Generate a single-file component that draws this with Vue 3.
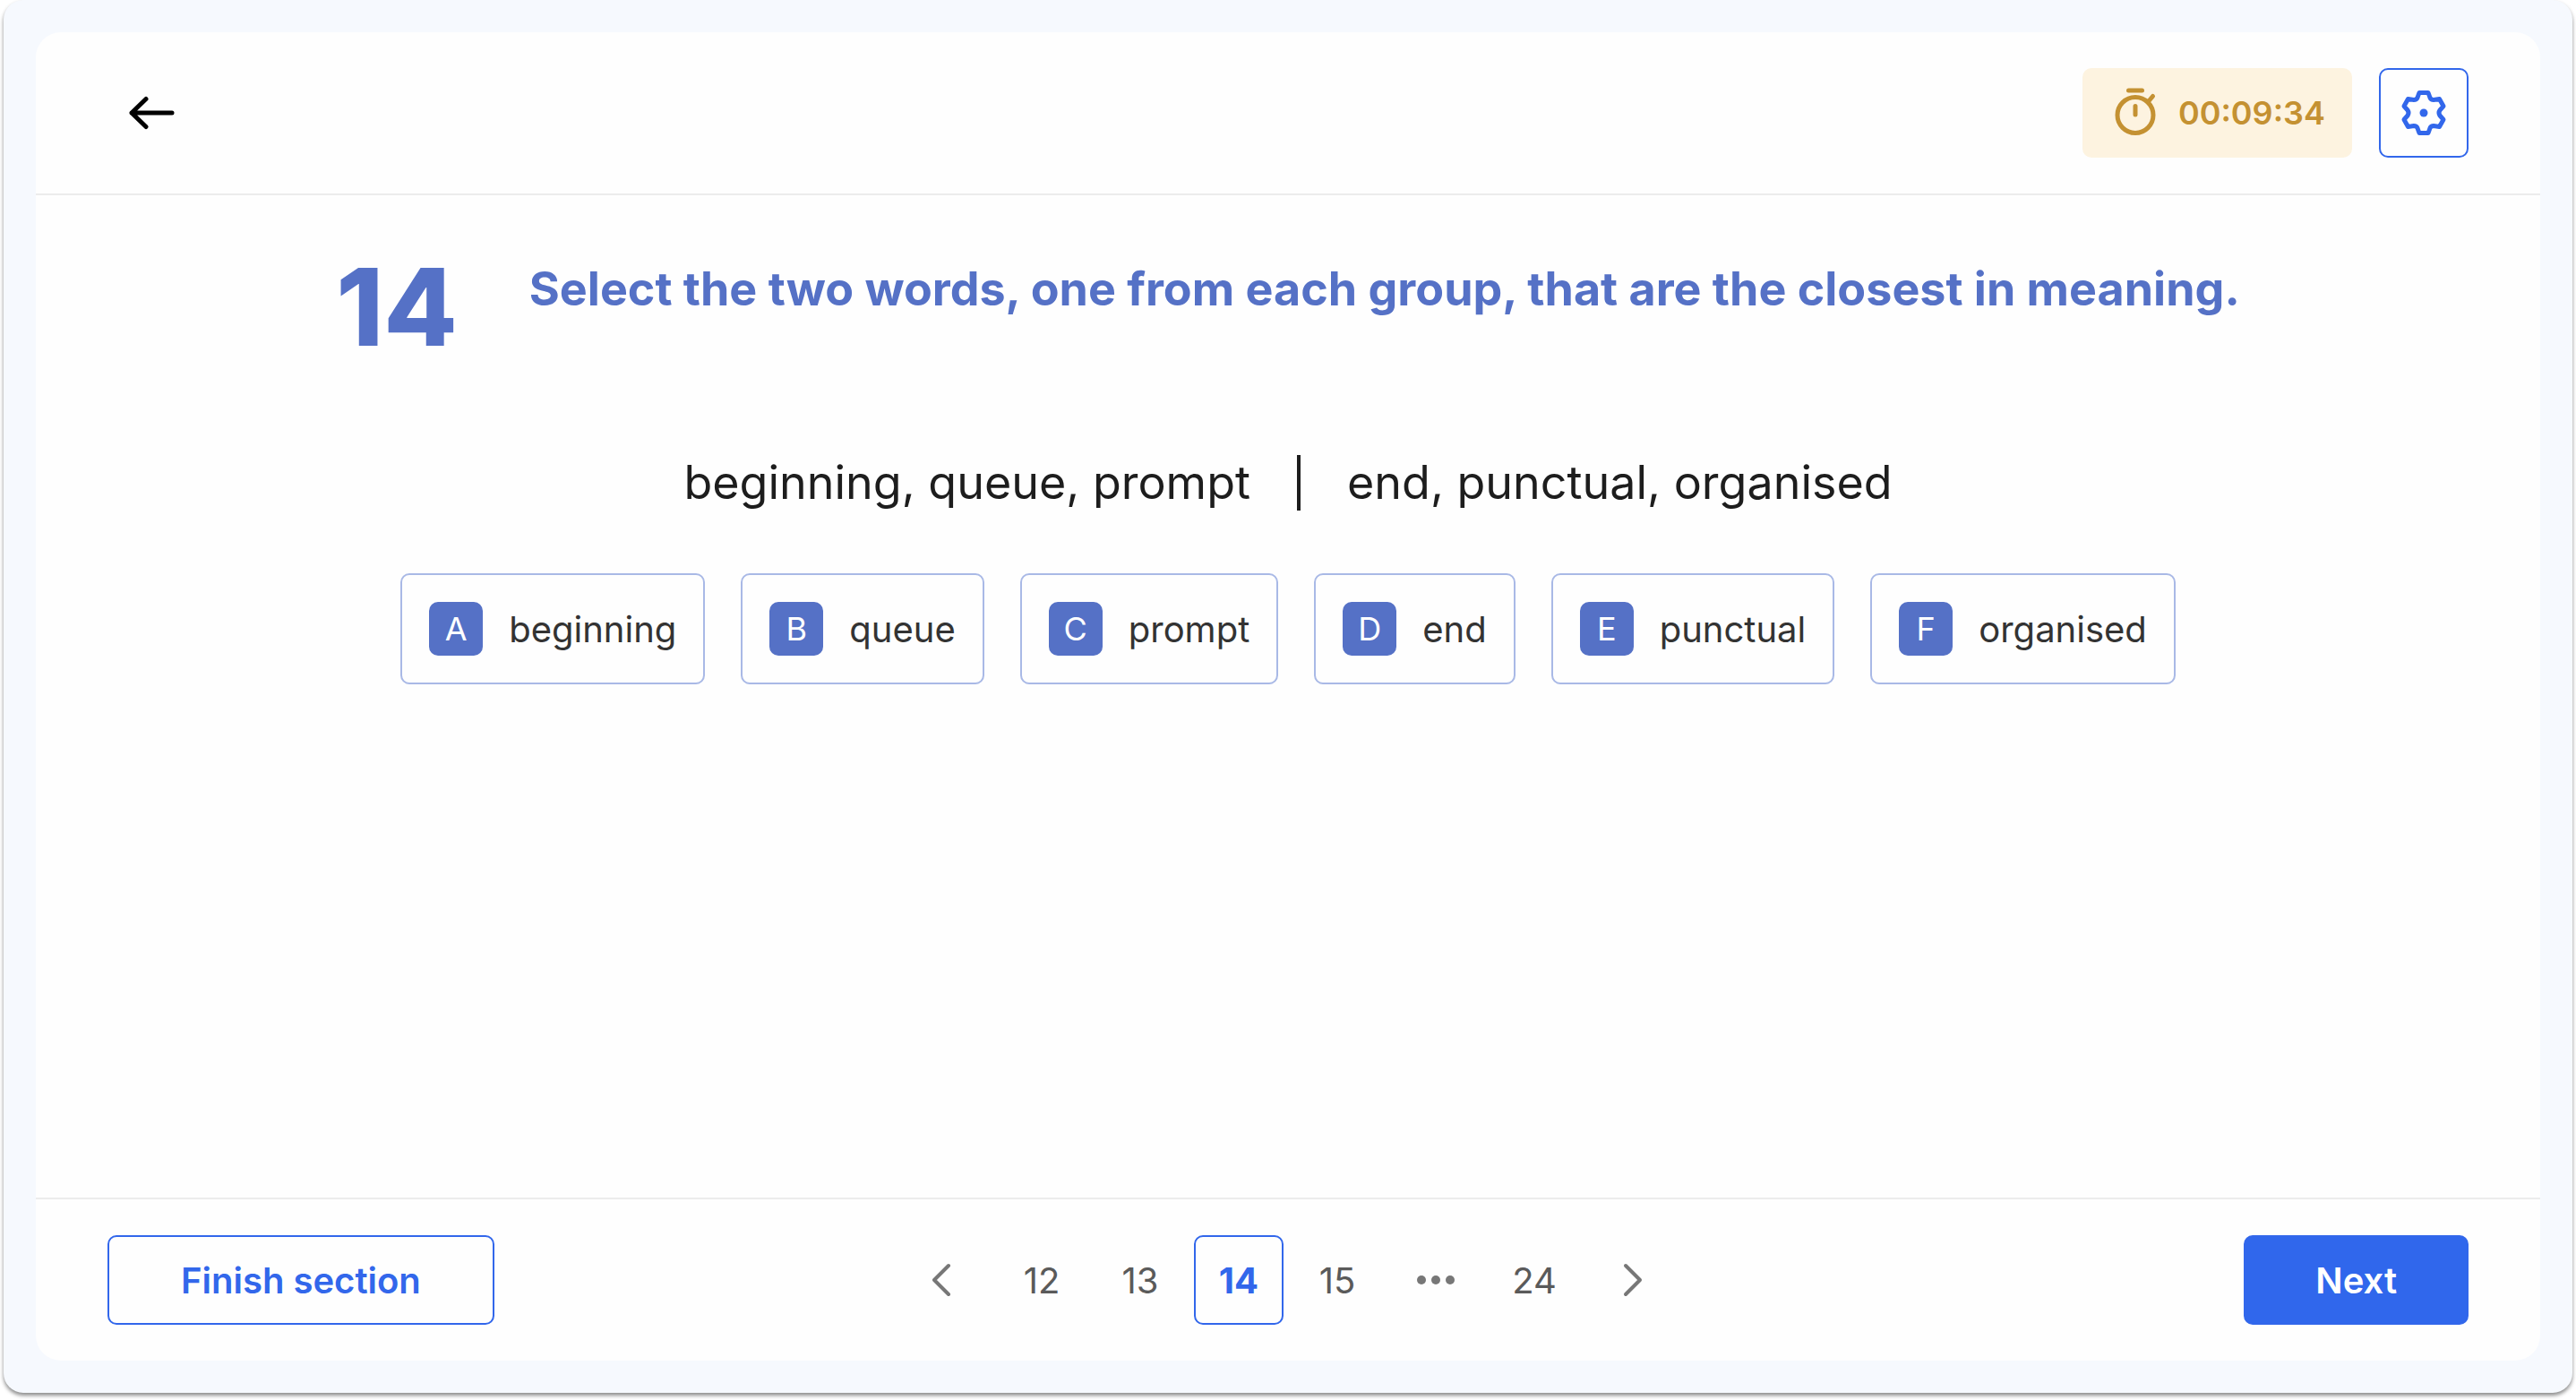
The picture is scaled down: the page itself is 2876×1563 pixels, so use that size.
<template>
  <div class="quiz-page">
    <div class="quiz-shell">
      <div class="quiz-card">
        <header class="quiz-header">
          <button type="button" class="back-btn" aria-label="Back">
            <svg width="52" height="40" viewBox="0 0 52 40">
              <path d="M48 20H3M19 4.500L3 20l16 15.500" />
            </svg>
          </button>
          <div class="header-actions">
            <div class="timer">
              <svg class="timer-icon" width="48" height="60" viewBox="0 0 48 60">
                <circle cx="24" cy="32.500" r="20" />
                <path d="M16.500 5h15M24 22.500v9.500M38 18l5.500-6.500" />
              </svg>
              <span>{{ timeLeft }}</span>
            </div>
            <button type="button" class="settings-btn" aria-label="Settings">
              <svg width="60" height="60" viewBox="-30 -30 60 60">
                <path :d="gearPath" />
                <circle cx="0" cy="0" r="4.500" />
              </svg>
            </button>
          </div>
        </header>

        <main class="quiz-body">
          <div class="question-row">
            <span class="question-number">{{ current }}</span>
            <h1 class="question-title">
              Select the two words, one from each group, that are the closest in meaning.
            </h1>
          </div>
          <div class="word-groups">
            <span>beginning, queue, prompt</span>
            <span class="divider"></span>
            <span>end, punctual, organised</span>
          </div>
          <div class="options">
            <button
              v-for="option in options"
              :key="option.letter"
              type="button"
              class="option"
            >
              <span class="option-letter">{{ option.letter }}</span>
              <span>{{ option.text }}</span>
            </button>
          </div>
        </main>

        <footer class="quiz-footer">
          <button type="button" class="btn btn-outline">Finish section</button>
          <nav class="pagination">
            <button type="button" class="page" aria-label="Previous" @click="current--">
              <svg width="24" height="38" viewBox="0 0 24 38">
                <path d="M18 3L2 19l16 16" />
              </svg>
            </button>
            <template v-for="page in pages" :key="page">
              <span v-if="page === 'more'" class="page">
                <svg class="dots" width="42" height="10" viewBox="0 0 42 10">
                  <circle cx="5" cy="5" r="5" />
                  <circle cx="21" cy="5" r="5" />
                  <circle cx="37" cy="5" r="5" />
                </svg>
              </span>
              <button
                v-else
                type="button"
                class="page"
                :class="{ active: page === current }"
                @click="current = page"
              >
                {{ page }}
              </button>
            </template>
            <button type="button" class="page" aria-label="Next page" @click="current++">
              <svg width="24" height="38" viewBox="0 0 24 38">
                <path d="M4 3l16 16L4 35" />
              </svg>
            </button>
          </nav>
          <button type="button" class="btn btn-primary">Next</button>
        </footer>
      </div>
    </div>
  </div>
</template>

<script setup>
import { ref } from 'vue'

const timeLeft = ref('00:09:34')
const current = ref(14)
const pages = [12, 13, 14, 15, 'more', 24]

const options = [
  { letter: 'A', text: 'beginning' },
  { letter: 'B', text: 'queue' },
  { letter: 'C', text: 'prompt' },
  { letter: 'D', text: 'end' },
  { letter: 'E', text: 'punctual' },
  { letter: 'F', text: 'organised' }
]

const gearPath =
  'M-5-22.500H5L7-17Q8-14.500 11-14.500L17.500-15.500 22-7.500 18-3Q16 0 18 3L22 7.500 17.500 15.500 11 14.500Q8 14.500 7 17L5 22.500H-5L-7 17Q-8 14.500-11 14.500L-17.500 15.500-22 7.500-18 3Q-16 0-18-3L-22-7.500-17.500-15.500-11-14.500Q-8-14.500-7-17Z'
</script>

<style>
body {
  margin: 0;
  background: #fff;
}
</style>

<style scoped>
.quiz-page {
  display: flex;
  box-sizing: border-box;
  min-height: 100vh;
  padding: 0 4px 8px;
  font-family: Inter, 'Liberation Sans', sans-serif;
}

.quiz-shell {
  display: flex;
  flex: 1;
  padding: 36px;
  border-radius: 22px;
  background: #f6f9fe;
  box-shadow: 0 3px 4px rgba(0, 0, 0, 0.45);
}

.quiz-card {
  display: flex;
  flex: 1;
  flex-direction: column;
  border-radius: 28px;
  background: #fefefe;
}

button {
  margin: 0;
  padding: 0;
  border: none;
  background: none;
  font-family: inherit;
  cursor: pointer;
}

svg {
  display: block;
  fill: none;
  stroke: currentColor;
  stroke-width: 5;
  stroke-linecap: round;
  stroke-linejoin: round;
}

.quiz-header {
  display: flex;
  align-items: center;
  justify-content: space-between;
  padding: 40px 80px;
  border-bottom: 2px solid #ececec;
}

.back-btn {
  display: flex;
  align-items: center;
  justify-content: center;
  width: 100px;
  height: 100px;
  color: #000;
}

.header-actions {
  display: flex;
  gap: 30px;
}

.timer {
  display: flex;
  align-items: center;
  gap: 24px;
  height: 100px;
  padding: 0 30px 0 35px;
  border-radius: 10px;
  background: #fdf3e0;
  color: #c49132;
  font-size: 36px;
  font-weight: 600;
}

.settings-btn {
  display: flex;
  align-items: center;
  justify-content: center;
  box-sizing: border-box;
  width: 100px;
  height: 100px;
  border: 2px solid #3267eb;
  border-radius: 10px;
  color: #3267eb;
}

.settings-btn circle {
  fill: currentColor;
  stroke: none;
}

.quiz-body {
  flex: 1;
  padding: 70px 80px 40px;
}

.question-row {
  display: flex;
  justify-content: center;
  gap: 80px;
  color: #5571c6;
}

.question-number {
  font-size: 120px;
  font-weight: 800;
  line-height: 110px;
}

.question-title {
  margin: 0;
  font-size: 52px;
  font-weight: 700;
  line-height: 70px;
}

.word-groups {
  display: flex;
  align-items: center;
  justify-content: center;
  gap: 52px;
  margin-top: 110px;
  color: #1d1d1d;
  font-size: 52px;
  line-height: 62px;
}

.divider {
  width: 4px;
  height: 62px;
  background: currentColor;
}

.options {
  display: flex;
  flex-wrap: wrap;
  justify-content: center;
  gap: 40px;
  margin-top: 70px;
}

.option {
  display: flex;
  align-items: center;
  gap: 29px;
  padding: 30px;
  border: 2px solid #a9b9e6;
  border-radius: 10px;
  color: #333;
  font-size: 40px;
}

.option-letter {
  width: 60px;
  border-radius: 10px;
  background: #5571c6;
  color: #fff;
  font-size: 36px;
  line-height: 60px;
  text-align: center;
}

.quiz-footer {
  display: grid;
  grid-template-columns: 1fr auto 1fr;
  align-items: center;
  padding: 40px 80px;
  border-top: 2px solid #ececec;
}

.btn {
  box-sizing: border-box;
  height: 100px;
  padding: 0 80px;
  border: 2px solid #3267eb;
  border-radius: 10px;
  font-size: 40px;
  font-weight: 600;
}

.btn-outline {
  justify-self: start;
  color: #3267eb;
}

.btn-primary {
  justify-self: end;
  padding: 0 78px;
  background: #3067ec;
  color: #fff;
}

.pagination {
  display: flex;
  gap: 10px;
}

.page {
  display: flex;
  align-items: center;
  justify-content: center;
  box-sizing: border-box;
  width: 100px;
  height: 100px;
  border-radius: 10px;
  color: #5a5a5a;
  font-size: 40px;
}

.page svg {
  stroke: #777;
  stroke-width: 4;
}

.page .dots {
  fill: #777;
  stroke: none;
}

.page.active {
  border: 2px solid #3267eb;
  color: #3267eb;
  font-weight: 700;
}
</style>
